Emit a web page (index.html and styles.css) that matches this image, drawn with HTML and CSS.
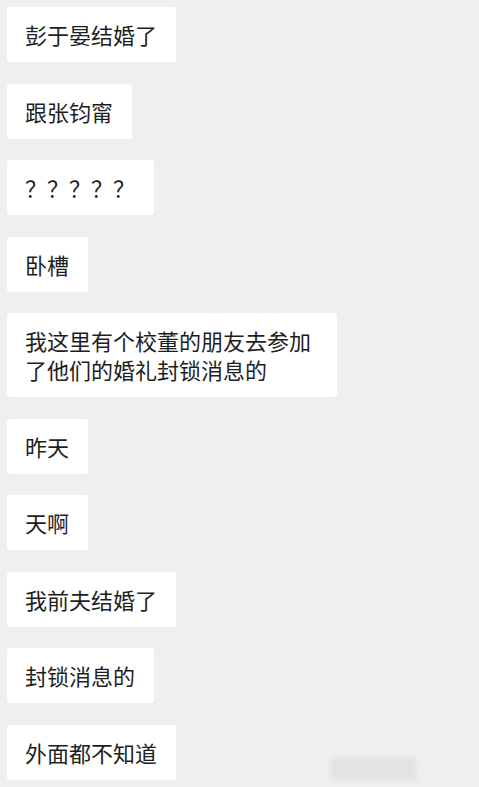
FILE: index.html
```html
<!DOCTYPE html>
<html lang="zh-CN">
<head>
    <meta charset="UTF-8">
    <meta name="viewport" content="width=device-width, initial-scale=1.0">
    <title>聊天记录</title>
    <link rel="stylesheet" href="styles.css">
</head>
<body>

    <div class="chat">
        <div class="bubble">彭于晏结婚了</div>
        <div class="bubble">跟张钧甯</div>
        <div class="bubble">？？？？？</div>
        <div class="bubble">卧槽</div>
        <div class="bubble">我这里有个校董的朋友去参加了他们的婚礼封锁消息的</div>
        <div class="bubble">昨天</div>
        <div class="bubble">天啊</div>
        <div class="bubble">我前夫结婚了</div>
        <div class="bubble">封锁消息的</div>
        <div class="bubble">外面都不知道</div>
    </div>

    <!-- 右下角模糊水印 -->
    <div class="watermark"></div>

</body>
</html>
```

FILE: styles.css
```css
body {
    font-family: "Noto Sans CJK SC", "Noto Sans", sans-serif;
    margin: 0;
    padding: 0;
    background-color: #efefef;
    color: #1e1e1e;
    height: 787px;
    overflow: hidden;
    position: relative;
}

.chat {
    display: flex;
    flex-direction: column;
    align-items: flex-start;
    gap: 21.5px;
    padding: 7px 0 0 7px;
}

.bubble {
    background-color: #ffffff;
    border-radius: 3px;
    padding: 13px 19px 13px 18px;
    font-size: 22px;
    line-height: 29px;
    max-width: 293px;
    word-break: break-all;
}

.watermark {
    position: absolute;
    left: 330px;
    top: 758px;
    width: 87px;
    height: 22px;
    background-color: #e3e3e3;
    filter: blur(2px);
}
```
